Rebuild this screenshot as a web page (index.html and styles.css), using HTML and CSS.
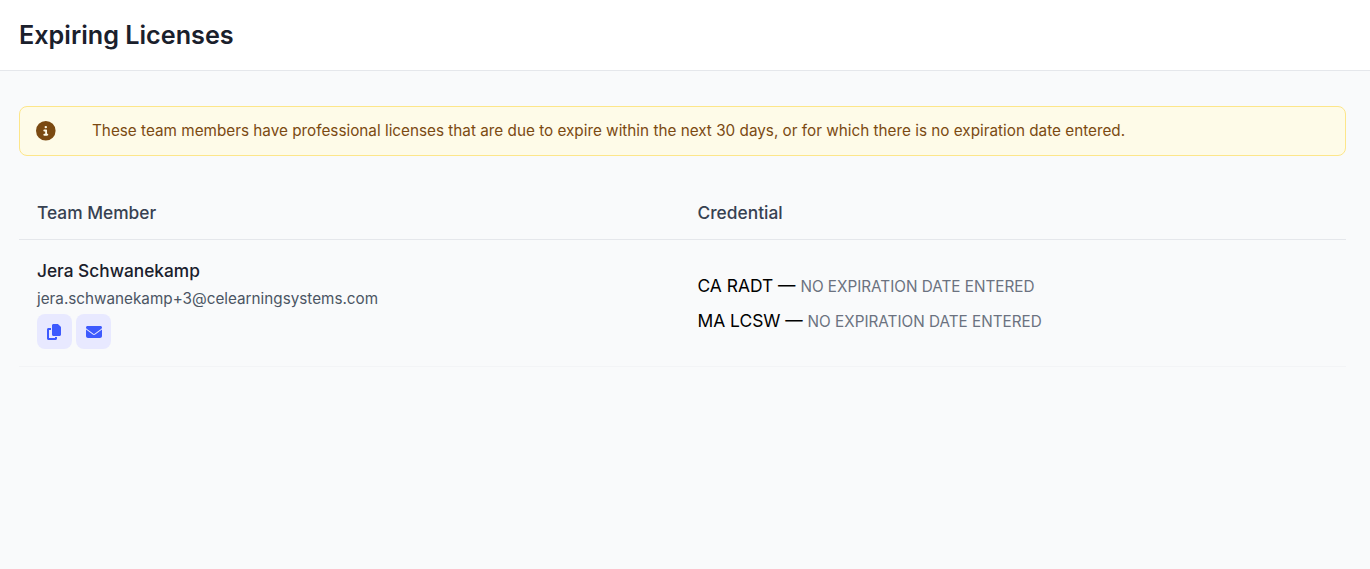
FILE: index.html
```html
<!DOCTYPE html>
<html>
<head>
    <title>Expiring Licenses</title>
    <link rel="stylesheet" href="styles.css">
</head>
<body>
    <header class="page-header">
        <h1>Expiring Licenses</h1>
    </header>

    <main class="page-content">
        <div class="alert">
            <svg class="alert-icon" viewBox="0 0 512 512"><path d="M256 512A256 256 0 1 0 256 0a256 256 0 1 0 0 512zM216 336h24V272H216c-13.3 0-24-10.7-24-24s10.7-24 24-24h48c13.3 0 24 10.7 24 24v88h8c13.3 0 24 10.7 24 24s-10.7 24-24 24H216c-13.3 0-24-10.7-24-24s10.7-24 24-24zm40-208a32 32 0 1 1 0 64 32 32 0 1 1 0-64z"/></svg>
            <p>These team members have professional licenses that are due to expire within the next 30 days, or for which there is no expiration date entered.</p>
        </div>

        <table class="license-table">
            <thead>
                <tr>
                    <th class="col-member">Team Member</th>
                    <th>Credential</th>
                </tr>
            </thead>
            <tbody>
                <tr>
                    <td>
                        <div class="member-name">Jera Schwanekamp</div>
                        <div class="member-email">jera.schwanekamp+3@celearningsystems.com</div>
                        <div class="member-actions">
                            <button type="button" class="icon-btn" aria-label="Copy email">
                                <svg class="icon-copy" viewBox="0 0 448 512"><path d="M208 0H332.1c12.7 0 24.9 5.1 33.9 14.1l67.9 67.9c9 9 14.1 21.2 14.1 33.9V336c0 26.5-21.5 48-48 48H208c-26.5 0-48-21.5-48-48V48c0-26.5 21.5-48 48-48zM48 128h80v64H64V448H256V416h64v48c0 26.5-21.5 48-48 48H48c-26.5 0-48-21.5-48-48V176c0-26.5 21.5-48 48-48z"/></svg>
                            </button>
                            <button type="button" class="icon-btn" aria-label="Send email">
                                <svg class="icon-mail" viewBox="0 0 512 512"><path d="M48 64C21.5 64 0 85.5 0 112c0 15.1 7.1 29.3 19.2 38.4L236.8 313.6c11.4 8.5 27 8.5 38.4 0L492.8 150.4c12.1-9.1 19.2-23.3 19.2-38.4c0-26.5-21.5-48-48-48H48zM0 176V384c0 35.3 28.7 64 64 64H448c35.3 0 64-28.7 64-64V176L294.4 339.2c-22.8 17.1-54 17.1-76.8 0L0 176z"/></svg>
                            </button>
                        </div>
                    </td>
                    <td>
                        <div class="credential">CA RADT &mdash; <span class="credential-note">No expiration date entered</span></div>
                        <div class="credential">MA LCSW &mdash; <span class="credential-note">No expiration date entered</span></div>
                    </td>
                </tr>
            </tbody>
        </table>
    </main>
</body>
</html>
```

FILE: styles.css
```css
html, body {
    height: 100%;
}
body {
    margin: 0;
    background-color: #f9fafb;
    font-family: Inter, "Noto Sans", sans-serif;
    color: #1a202c;
}

.page-header {
    height: 70px;
    padding: 0 19px;
    display: flex;
    align-items: center;
    background-color: #fff;
    border-bottom: 1px solid #e5e7eb;
}
.page-header h1 {
    margin: 0;
    font-size: 25.2px;
    line-height: 32px;
    font-weight: 600;
}

.page-content {
    padding: 35px 24px 0 19px;
}

.alert {
    display: flex;
    align-items: center;
    height: 48px;
    padding: 0 16px;
    background-color: #fefbe8;
    border: 1px solid #fde68a;
    border-radius: 8px;
    color: #7b4a12;
}
.alert p {
    margin: 0 0 0 36.4px;
    font-size: 15.29px;
    line-height: 20px;
}
.alert-icon {
    width: 19.6px;
    height: 19.6px;
    fill: #7b4a12;
    flex-shrink: 0;
}

.license-table {
    width: 100%;
    margin-top: 33px;
    border-collapse: collapse;
}
.license-table th {
    height: 46px;
    padding: 0 18px 4px;
    text-align: left;
    font-size: 17.35px;
    font-weight: 500;
    color: #374151;
    border-bottom: 1px solid #e5e7eb;
}
.col-member {
    width: 624.5px;
}
.license-table td {
    height: 124px;
    padding: 2px 18px 0;
    border-bottom: 1px solid #f3f4f6;
    vertical-align: middle;
}

.member-name {
    font-size: 17.3px;
    line-height: 24px;
    font-weight: 500;
}
.member-email {
    margin-top: 6px;
    font-size: 15.25px;
    line-height: 20px;
    color: #4b5563;
}
.member-actions {
    display: flex;
    gap: 4px;
    margin-top: 5px;
}
.icon-btn {
    width: 35px;
    height: 35px;
    padding: 0;
    display: flex;
    align-items: center;
    justify-content: center;
    background-color: #e8e9ff;
    border: 0;
    border-radius: 8px;
}
.icon-btn svg {
    fill: #3d5afe;
}
.icon-copy {
    width: 14px;
    height: 16px;
    margin-right: 2px;
}
.icon-mail {
    width: 16px;
    height: 16px;
}

.credential {
    font-size: 17.4px;
    line-height: 24px;
    color: #000;
    margin: 10px 0;
}
.credential-note {
    font-size: 15.28px;
    color: #6b7280;
    text-transform: uppercase;
}
```
